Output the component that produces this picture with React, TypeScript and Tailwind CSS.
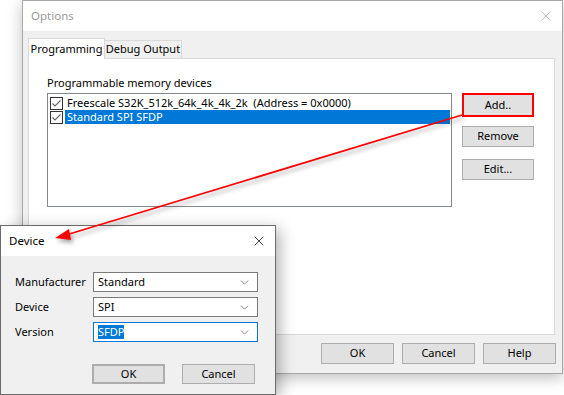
import { ChevronDown, X } from 'lucide-react'

const FONT = { fontFamily: '"Noto Sans", "Open Sans", sans-serif' }

function Check() {
  return (
    <span className="flex h-[13px] w-[13px] shrink-0 items-center justify-center border border-[#333] bg-white">
      <svg width="11" height="11" viewBox="0 0 11 11">
        <path d="M1.5 5.5 L4 8 L9.5 2.5" fill="none" stroke="#666" strokeWidth="1.1" />
      </svg>
    </span>
  )
}

function WinButton({ label, className = '' }: { label: string; className?: string }) {
  return (
    <div className={`flex items-center justify-center border border-[#adadad] bg-[#e1e1e1] text-[11px] text-black ${className}`}>
      {label}
    </div>
  )
}

function Combo({ value, focused = false, selected = false }: { value: string; focused?: boolean; selected?: boolean }) {
  return (
    <div className={`flex h-[20px] w-[165px] items-center justify-between border bg-white pl-[4px] pr-[6px] ${focused ? 'border-[#0078d7]' : 'border-[#7a7a7a]'}`}>
      <span className={`text-[11px] leading-[14px] ${selected ? 'bg-[#0078d7] text-white' : 'text-black'}`}>{value}</span>
      <ChevronDown size={13} strokeWidth={1.2} color="#444" />
    </div>
  )
}

export default function App() {
  return (
    <div className="relative h-[395px] w-[564px] overflow-hidden bg-white text-[11px]" style={FONT}>
      {/* Options window */}
      <div className="absolute left-[22px] top-0 flex h-[374px] w-[541px] flex-col border border-[#a8a8a8] bg-[#f0f0f0] shadow-[0_4px_14px_rgba(0,0,0,0.25)]">
        <div className="flex h-[30px] shrink-0 items-center justify-between bg-white pl-[8px] pr-[8px]">
          <span className="text-[11.5px] text-[#999]">Options</span>
          <X size={16} strokeWidth={1} color="#999" />
        </div>
        <div className="flex flex-1 flex-col px-[5px] pt-[7px]">
          <div className="flex h-[20px] items-end">
            <div className="relative z-10 -mb-px flex h-[21px] w-[77px] items-center justify-center whitespace-nowrap border border-b-0 border-[#d9d9d9] bg-white">
              Programming
            </div>
            <div className="flex h-[18px] w-[77px] items-center justify-center whitespace-nowrap border border-l-0 border-b-0 border-[#d9d9d9] bg-[#f0f0f0]">
              Debug Output
            </div>
          </div>
          <div className="flex h-[277px] w-[527px] flex-col border border-[#d9d9d9] bg-white pl-[18px] pt-[16px]">
            <div className="leading-[15px]">Programmable memory devices</div>
            <div className="mt-[3px] flex gap-[10px]">
              <div className="flex h-[114px] w-[405px] flex-col border border-[#828790] pl-[2px] pt-[2px] pr-[1px]">
                <div className="flex h-[14px] items-center gap-[3px]">
                  <Check />
                  <span className="whitespace-pre pl-[1px] leading-[14px]">Freescale S32K_512k_64k_4k_4k_2k  (Address = 0x0000)</span>
                </div>
                <div className="flex h-[14px] items-center gap-[2px]">
                  <Check />
                  <span className="flex h-[14px] flex-1 items-center bg-[#0078d7] pl-[2px] leading-[14px] text-white">Standard SPI SFDP</span>
                </div>
              </div>
              <div className="flex flex-col">
                <WinButton label="Add.." className="h-[24px] w-[72px] border-2 border-[#ff0000]" />
                <WinButton label="Remove" className="mt-[9px] h-[21px] w-[72px]" />
                <WinButton label="Edit..." className="mt-[12px] h-[21px] w-[72px]" />
              </div>
            </div>
          </div>
          <div className="mt-[8px] flex justify-end gap-[8px] pr-[1px]">
            <WinButton label="OK" className="h-[21px] w-[73px]" />
            <WinButton label="Cancel" className="h-[21px] w-[73px]" />
            <WinButton label="Help" className="h-[21px] w-[73px]" />
          </div>
        </div>
      </div>

      {/* Device dialog */}
      <div className="absolute left-0 top-[225px] flex h-[170px] w-[276px] flex-col border border-[#6b6b6b] bg-[#f0f0f0] shadow-[4px_4px_14px_rgba(0,0,0,0.3)]">
        <div className="flex h-[30px] shrink-0 items-center justify-between bg-white pl-[8px] pr-[8px]">
          <span className="text-[11.5px] text-black">Device</span>
          <X size={16} strokeWidth={1.2} color="#111" />
        </div>
        <div className="flex flex-col gap-[5px] pl-[14px] pt-[16px]">
          <div className="flex items-center">
            <span className="w-[78px]">Manufacturer</span>
            <Combo value="Standard" />
          </div>
          <div className="flex items-center">
            <span className="w-[78px]">Device</span>
            <Combo value="SPI" />
          </div>
          <div className="flex items-center">
            <span className="w-[78px]">Version</span>
            <Combo value="SFDP" focused selected />
          </div>
        </div>
        <div className="mt-[22px] flex gap-[17px] pl-[91px]">
          <WinButton label="OK" className="h-[20px] w-[73px] border-2 border-[#0078d7]" />
          <WinButton label="Cancel" className="h-[20px] w-[73px]" />
        </div>
      </div>

      {/* Arrow */}
      <svg className="pointer-events-none absolute left-0 top-0" width="564" height="395" style={{ filter: 'drop-shadow(2px 3px 2px rgba(0,0,0,0.35))' }}>
        <line x1="462" y1="115" x2="66" y2="235" stroke="#ff0000" strokeWidth="1.8" />
        <polygon points="55,238 69,229 71,240" fill="#ff0000" />
      </svg>
    </div>
  )
}
